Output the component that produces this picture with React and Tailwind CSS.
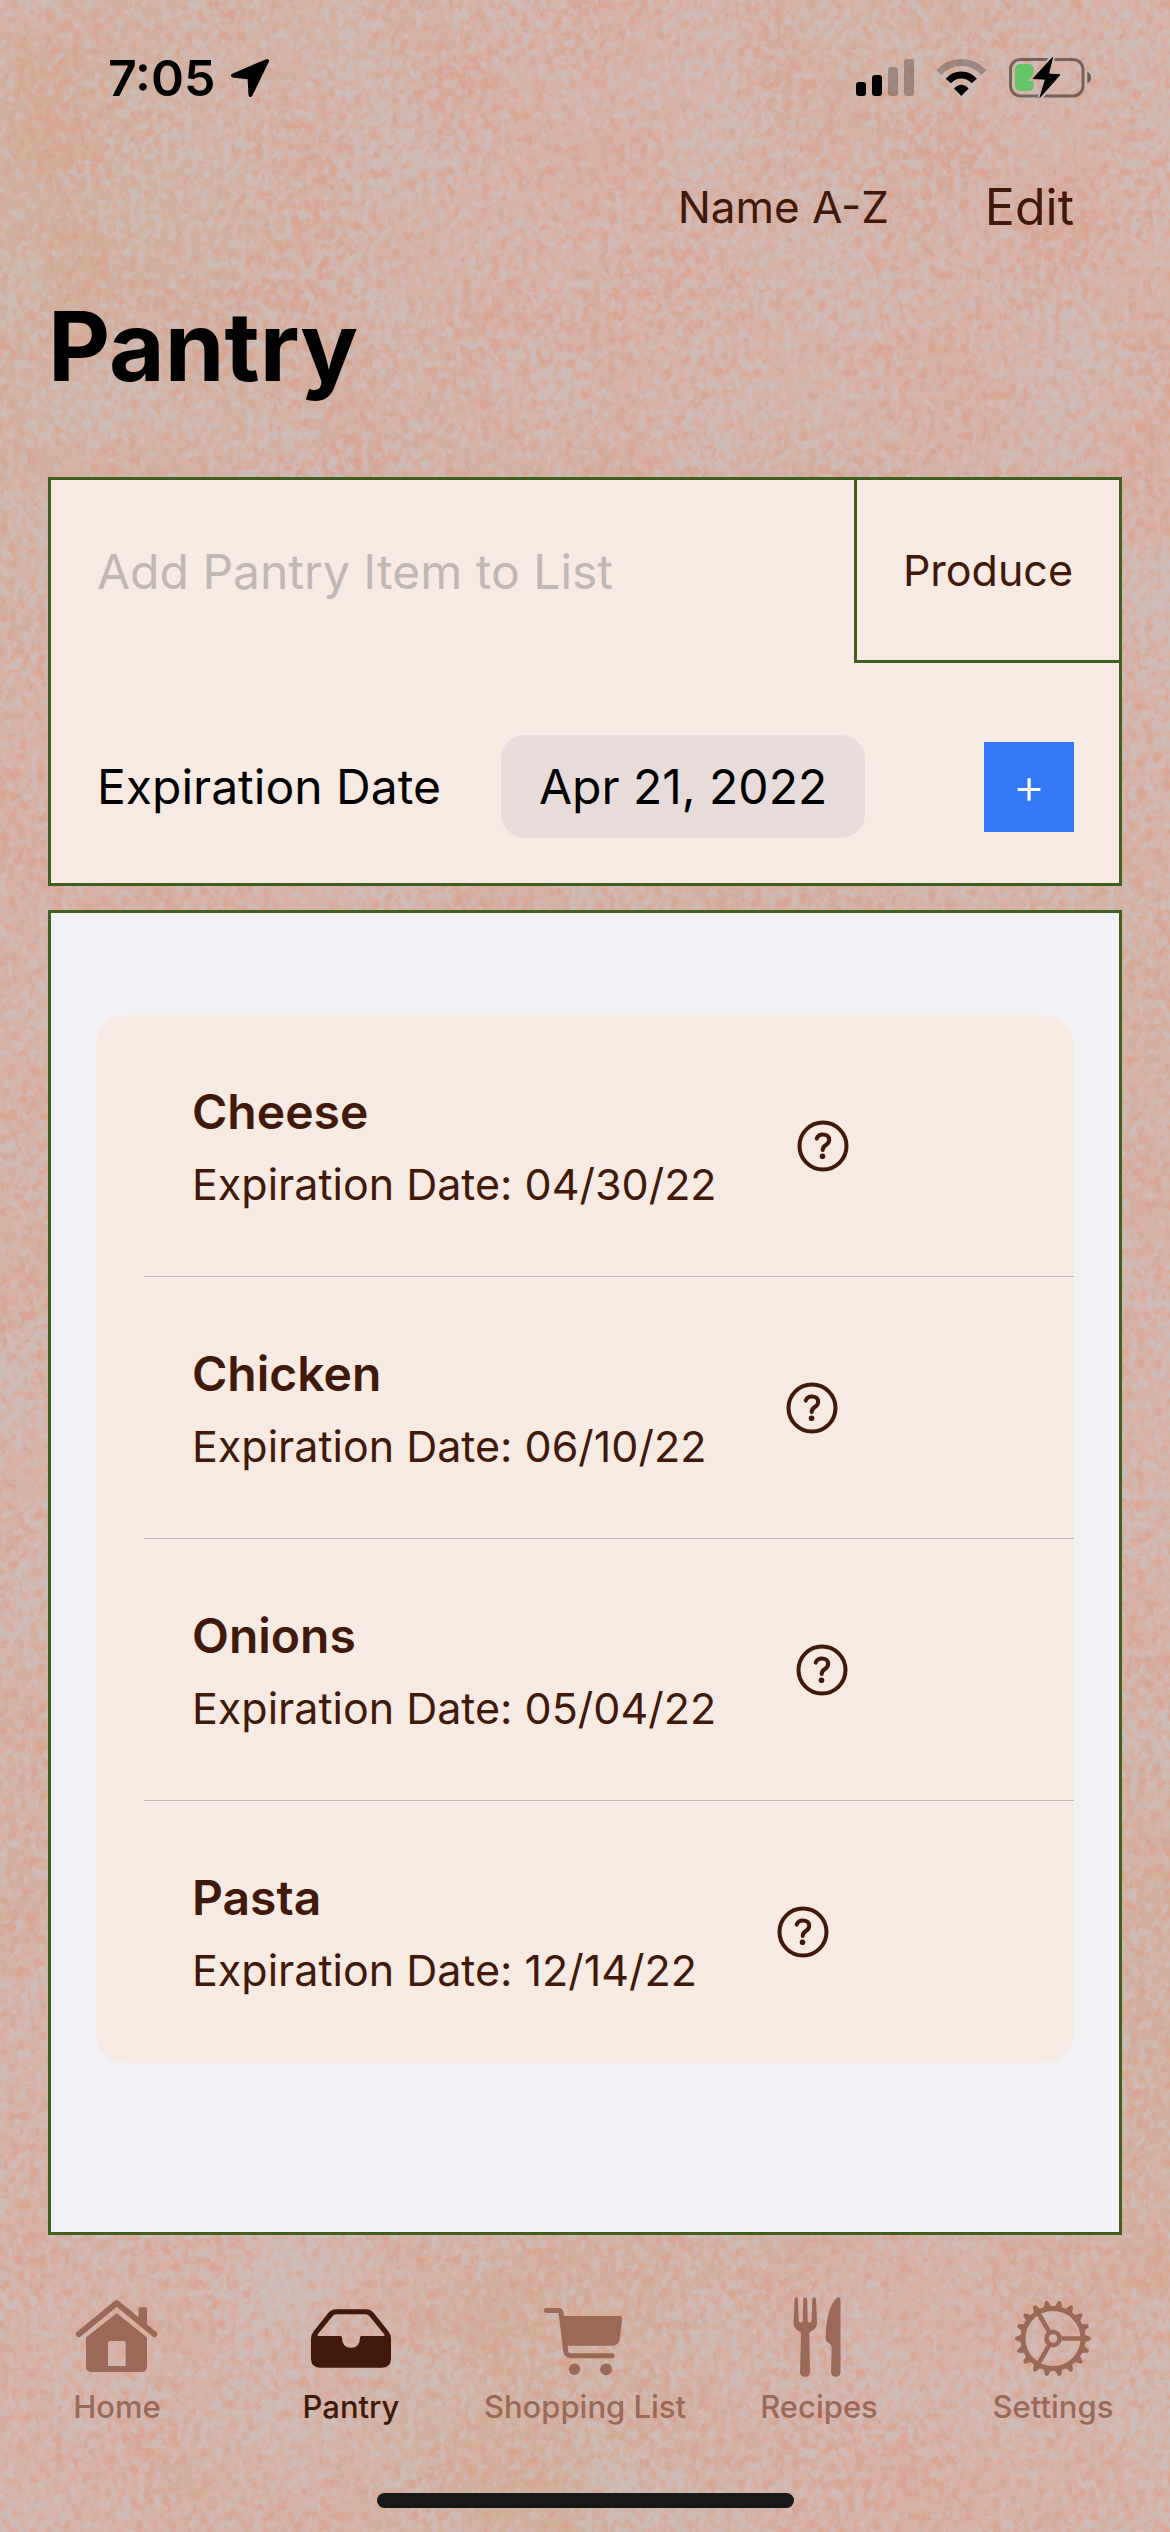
function Texture() {
  return (
    <svg className="absolute inset-0 -z-10 h-full w-full" aria-hidden="true">
      <filter id="cloud" x="0" y="0" width="100%" height="100%" colorInterpolationFilters="sRGB">
        <feTurbulence type="fractalNoise" baseFrequency="0.002 0.0015" numOctaves="3" seed="4" />
        <feColorMatrix values="0 0 0 0 0.81  0 0 0 0 0.69  0 0 0 0 0.60  2.4 0 0 0 -1" />
      </filter>
      <filter id="frost" x="0" y="0" width="100%" height="100%" colorInterpolationFilters="sRGB">
        <feTurbulence type="fractalNoise" baseFrequency="0.13 0.1" numOctaves="3" seed="11" result="fine" />
        <feTurbulence type="fractalNoise" baseFrequency="0.009" numOctaves="6" seed="31" result="wide" />
        <feComposite in="fine" in2="wide" operator="arithmetic" k2="0.72" k3="0.28" />
        <feColorMatrix values="0 0 0 0 0.79  0 0 0 0 0.77  0 0 0 0 0.79  6 0 0 0 -2.8" />
      </filter>
      <filter id="blush" x="0" y="0" width="100%" height="100%" colorInterpolationFilters="sRGB">
        <feTurbulence type="fractalNoise" baseFrequency="0.11 0.09" numOctaves="3" seed="23" result="fine" />
        <feTurbulence type="fractalNoise" baseFrequency="0.008" numOctaves="6" seed="57" result="wide" />
        <feComposite in="fine" in2="wide" operator="arithmetic" k2="0.72" k3="0.28" />
        <feColorMatrix values="0 0 0 0 0.87  0 0 0 0 0.61  0 0 0 0 0.52  0 6 0 0 -2.9" />
      </filter>
      <rect width="100%" height="100%" fill="#d6b1a4" />
      <rect width="100%" height="100%" filter="url(#cloud)" opacity="0.7" />
      <rect width="100%" height="100%" filter="url(#blush)" opacity="0.5" />
      <rect width="100%" height="100%" filter="url(#frost)" opacity="0.55" />
    </svg>
  );
}

function LocationArrow() {
  return (
    <svg className="h-10 w-10" viewBox="0 0 40 40" fill="currentColor" stroke="currentColor" strokeWidth="4" strokeLinejoin="round" aria-hidden="true">
      <path d="M37 3 L3 17.5 L19.5 19.5 L20.5 37 Z" />
    </svg>
  );
}

function StatusIcons() {
  const bolt = "M198.5 .5 L179.2 21.5 L191.5 22.2 L186 40.3 L206 17.8 L194.5 17 Z";
  return (
    <svg className="h-[42px] w-[240px]" viewBox="0 0 240 42" role="img" aria-label="Signal, Wi-Fi and charging battery">
      <mask id="boltGap">
        <rect width="240" height="42" fill="white" />
        <path d={bolt} fill="black" stroke="black" strokeWidth="5" />
      </mask>
      <rect x="2" y="25" width="10" height="14" rx="3" />
      <rect x="18" y="18" width="10" height="21" rx="3" />
      <rect x="34" y="10" width="10" height="29" rx="3" opacity="0.25" />
      <rect x="50" y="2" width="10" height="37" rx="3" opacity="0.25" />
      <path d="M84.8 15.6 A30 30 0 0 1 129.8 15.6" fill="none" stroke="black" strokeWidth="7" opacity="0.25" />
      <path d="M94.3 24 A17.3 17.3 0 0 1 120.3 24" fill="none" stroke="black" strokeWidth="7" />
      <path d="M107.3 39 L100 31.5 Q107.3 24 114.6 31.5 Z" />
      <g mask="url(#boltGap)">
        <rect x="156.5" y="2.5" width="72.5" height="36.5" rx="10" fill="none" stroke="black" strokeWidth="3" opacity="0.45" />
        <rect x="161" y="7" width="18.5" height="27" rx="5" fill="#65c466" />
      </g>
      <path d="M233.3 14.5 Q237 16.5 237 20.5 Q237 24.5 233.3 26.5 Z" opacity="0.5" />
      <path d={bolt} stroke="black" strokeLinejoin="round" />
    </svg>
  );
}

function QuestionIcon() {
  return (
    <svg className="size-[52px]" viewBox="0 0 52 52" fill="none" stroke="currentColor" strokeWidth="4" strokeLinecap="round" aria-hidden="true">
      <circle cx="26" cy="26" r="23.5" />
      <path d="M19.7 18.6 C20.6 15.6 22.8 14.4 25.8 14.4 C29.6 14.4 32.2 16.6 32.2 19.8 C32.2 22.6 30.6 24 28.6 25.3 C26.6 26.6 25.7 27.6 25.7 30" />
      <circle cx="25.5" cy="36.3" r="2.8" fill="currentColor" stroke="none" />
    </svg>
  );
}

const teeth = Array.from({ length: 18 }, (_, i) => i * 20);

const icons = {
  home: (
    <>
      <path d="M4 39 L41.7 8 L79.3 39" fill="none" stroke="currentColor" strokeWidth="6" strokeLinecap="round" strokeLinejoin="round" />
      <path d="M63.5 27 V14 Q63.5 12.3 65.2 12.3 H70.3 Q72 12.3 72 14 V34 Z" />
      <path fillRule="evenodd" d="M40 19.6 Q41.7 17.6 43.4 19.6 L72 42.5 V71 Q72 77 66 77 H17 Q11 77 11 71 V42.5 Z M35 46 Q33 46 33 48 V71 H50.7 V48 Q50.7 46 48.7 46 Z" />
    </>
  ),
  pantry: (
    <path fillRule="evenodd" d="M27 14.3 H57 Q62 14.3 65 18.3 L79.5 36.5 Q82 39.8 82 43.5 V63.5 Q82 72.7 73 72.7 H11 Q2 72.7 2 63.5 V43.5 Q2 39.8 4.5 36.5 L19 18.3 Q22 14.3 27 14.3 Z M27.5 19.3 Q25 19.3 23.3 21.4 L8.6 39.5 Q8 41 9.4 41 H31.5 Q33 41 33 42.7 Q33 52.7 42 52.7 Q51 52.7 51 42.7 Q51 41 52.5 41 H75 Q76 41 75.4 39.5 L60.7 21.4 Q59 19.3 56.5 19.3 Z" />
  ),
  cart: (
    <>
      <path d="M3.5 15.5 H15.5 Q17.8 15.5 18.1 18 L22.6 55.5 Q23.2 60.7 28 60.7 H69" fill="none" stroke="currentColor" strokeWidth="5" strokeLinecap="round" />
      <path d="M18 21 H76.8 Q79.6 21 79.2 24 L76.8 43.5 Q75.9 50.8 69 50.8 H22 Z" />
      <circle cx="31.5" cy="74.3" r="5.7" />
      <circle cx="63" cy="74.3" r="5.9" />
    </>
  ),
  utensils: (
    <>
      <path d="M17.6 4.2 Q17.8 2.3 19.3 2.3 Q20.9 2.3 20.9 4.2 L21.8 26 Q22 27.5 23.8 27.5 Q25.6 27.5 25.7 26 L26.3 4.2 Q26.4 2.3 28.2 2.3 Q30 2.3 30.1 4.2 L30.7 26 Q30.8 27.5 32.6 27.5 Q34.4 27.5 34.6 26 L35.3 4.2 Q35.4 2.3 37 2.3 Q38.8 2.3 39 4.2 L40 27.5 Q40 34 33.5 36.5 Q32.2 37 32.3 39 L33 77 Q33 81.8 28 81.8 Q23 81.8 23 77 L24 39 Q24 37 22.5 36.5 Q16.6 34 16.6 27.5 Z" />
      <path d="M63.5 4.5 V77 Q63.5 81.8 58.8 81.8 Q54 81.8 54 77 L54.7 52.5 Q54.7 50.3 53 49 L50.4 47 Q48.7 45.8 48.7 43.5 C48.7 24 53 9 59.5 3.2 Q63.5 .8 63.5 4.5 Z" />
    </>
  ),
  gear: (
    <g fill="none" stroke="currentColor" strokeWidth="4.6" transform="translate(42 43.5)">
      {teeth.map((a) => (
        <path key={a} d="M30 -4.5 L37.4 -1.6 Q38.8 0 37.4 1.6 L30 4.5 Z" fill="currentColor" stroke="none" transform={`rotate(${a})`} />
      ))}
      <circle r="30" strokeWidth="5" />
      <circle r="6.6" />
      <path d="M8.5 0 H29 M-4.2 -7.4 L-14.5 -25.1 M-4.2 7.4 L-14.5 25.1" />
    </g>
  ),
};

const tabs = [
  { label: "Home", icon: "home" },
  { label: "Pantry", icon: "pantry", active: true },
  { label: "Shopping List", icon: "cart" },
  { label: "Recipes", icon: "utensils" },
  { label: "Settings", icon: "gear" },
];

const items = [
  { name: "Cheese", date: "04/30/22" },
  { name: "Chicken", date: "06/10/22" },
  { name: "Onions", date: "05/04/22" },
  { name: "Pasta", date: "12/14/22" },
];

export default function App() {
  return (
    <div className="relative isolate flex min-h-screen flex-col font-['Inter',sans-serif] text-[#41190a]">
      <Texture />

      <div className="flex h-[156px] items-center justify-between pr-[76px] pl-[108px] text-black">
        <div className="flex items-center gap-3.5">
          <span className="text-[50px] font-semibold">7:05</span>
          <LocationArrow />
        </div>
        <StatusIcons />
      </div>

      <header className="px-12">
        <div className="flex h-[102px] items-center justify-end gap-24 pr-12">
          <select aria-label="Sort order" className="field-sizing-content appearance-none bg-transparent text-[44px]">
            <option>Name A-Z</option>
          </select>
          <button type="button" className="text-[50px]">Edit</button>
        </div>
        <h1 className="pt-7 text-[96px] leading-[120px] font-bold text-black">Pantry</h1>
      </header>

      <main className="flex flex-1 flex-col gap-6 px-12 pt-[71px]">
        <form className="border-[3px] border-[#425e1f] bg-[#f7eae2]" onSubmit={(e) => e.preventDefault()}>
          <div className="flex h-[183px]">
            <input
              type="text"
              aria-label="Pantry item"
              placeholder="Add Pantry Item to List"
              className="min-w-0 flex-1 bg-transparent pl-[46px] text-[48px] outline-none placeholder:text-[#c1b8b4]"
            />
            <select
              aria-label="Category"
              className="field-sizing-content appearance-none border-b-[3px] border-l-[3px] border-[#425e1f] bg-transparent px-[46px] text-[43px]"
            >
              <option>Produce</option>
            </select>
          </div>
          <div className="flex items-center pt-[72px] pr-[45px] pb-[45px] pl-[46px] text-black">
            <span id="expiry" className="text-[48px]">Expiration Date</span>
            <button type="button" aria-describedby="expiry" className="ml-[60px] h-[103px] rounded-[24px] bg-[#e7dcd9] px-[38px] text-[48px]">
              Apr 21, 2022
            </button>
            <button type="submit" aria-label="Add item" className="ml-auto size-[90px] bg-[#3478f6] text-[50px] font-light text-white">
              +
            </button>
          </div>
        </form>

        <section className="flex-1 border-[3px] border-[#425e1f] bg-[#f2f1f6] px-[45px] pt-[102px]">
          <ul className="rounded-[30px] bg-[#f7eae2] pl-12">
            {items.map((item) => (
              <li key={item.name} className="flex h-[262px] items-center gap-20 border-b border-[#c1b6b1] pl-12 last:border-b-0">
                <div className="pt-1">
                  <h2 className="text-[48px] leading-[72px] font-semibold">{item.name}</h2>
                  <p className="text-[43px] leading-[72px]">Expiration Date: {item.date}</p>
                </div>
                <button type="button" aria-label={`About ${item.name}`}>
                  <QuestionIcon />
                </button>
              </li>
            ))}
          </ul>
        </section>
      </main>

      <nav className="flex pt-[60px]">
        {tabs.map((tab) => (
          <a
            key={tab.label}
            href="#"
            aria-current={tab.active ? "page" : undefined}
            className={tab.active ? "flex flex-1 basis-0 flex-col items-center gap-2" : "flex flex-1 basis-0 flex-col items-center gap-2 text-[#9b6957]"}
          >
            <svg className="size-[84px]" viewBox="0 0 84 84" fill="currentColor" aria-hidden="true">
              {icons[tab.icon]}
            </svg>
            <span className="text-[31px] leading-10 font-medium whitespace-nowrap">{tab.label}</span>
          </a>
        ))}
      </nav>
      <div className="mx-auto mt-[66px] mb-6 h-[15px] w-[417px] rounded-full bg-[#181818]" />
    </div>
  );
}
